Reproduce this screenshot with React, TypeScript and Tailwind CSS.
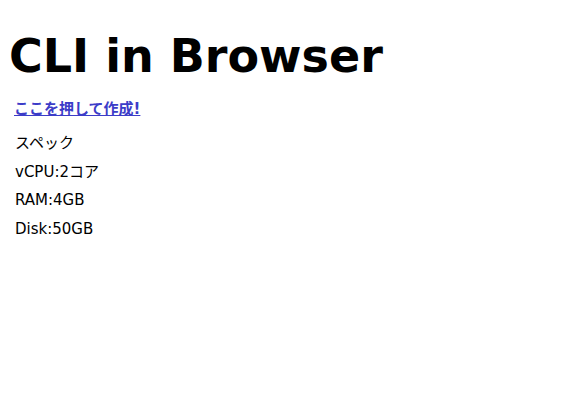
export default function App() {
  return (
    <div className="min-h-[400px] bg-white text-black" style={{ fontFamily: '"DejaVu Sans", "Noto Sans CJK JP", sans-serif' }}>
      <h1 className="px-[9px] pt-[24px] text-[46px] font-bold leading-[64px]">CLI in Browser</h1>
      <div className="px-[14px] pt-[9px]">
        <a href="#" className="text-[15px] font-bold text-[#3c3cc8] underline leading-[20px]">ここを押して作成!</a>
      </div>
      <div className="px-[15px] pt-[8px]">
        <p className="text-[15px] leading-[28.5px]">スペック</p>
        <p className="text-[15px] leading-[28.5px]">vCPU:2コア</p>
        <p className="text-[15px] leading-[28.5px]">RAM:4GB</p>
        <p className="text-[15px] leading-[28.5px]">Disk:50GB</p>
      </div>
    </div>
  );
}
